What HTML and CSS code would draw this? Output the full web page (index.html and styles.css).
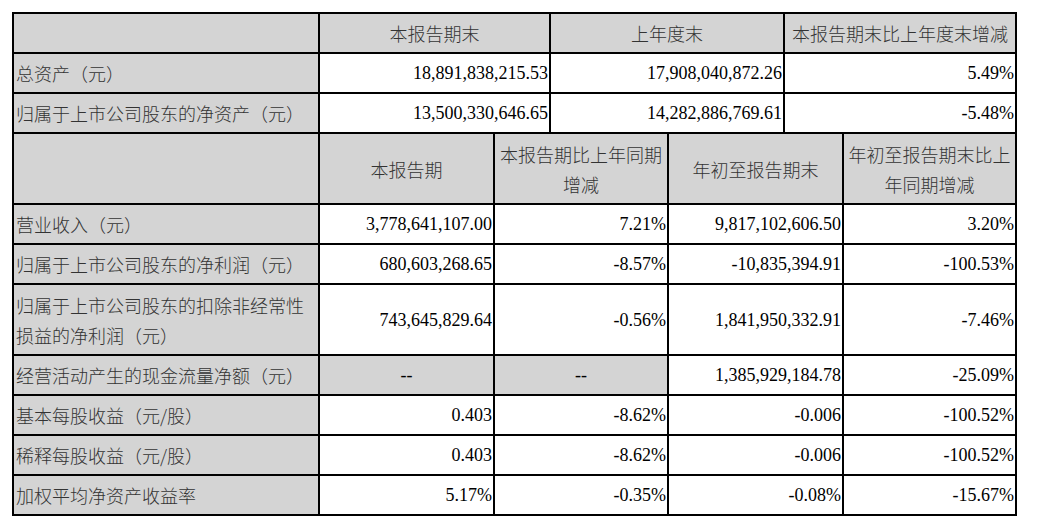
FILE: index.html
```html
<!DOCTYPE html>
<html lang="zh-CN">
<head>
<meta charset="utf-8">
<title>主要会计数据和财务指标</title>
<link rel="stylesheet" href="styles.css">
</head>
<body>
<div class="page">
<table class="fin">
  <colgroup>
    <col class="c-label">
    <col class="c-a">
    <col class="c-b">
    <col class="c-c">
    <col class="c-d">
    <col class="c-e">
    <col class="c-f">
  </colgroup>
  <tbody>
    <tr>
      <td class="lbl"></td>
      <td class="hd" colspan="2">本报告期末</td>
      <td class="hd" colspan="2">上年度末</td>
      <td class="hd" colspan="2">本报告期末比上年度末增减</td>
    </tr>
    <tr>
      <td class="lbl">总资产（元）</td>
      <td class="num" colspan="2">18,891,838,215.53</td>
      <td class="num" colspan="2">17,908,040,872.26</td>
      <td class="num" colspan="2">5.49%</td>
    </tr>
    <tr>
      <td class="lbl">归属于上市公司股东的净资产（元）</td>
      <td class="num" colspan="2">13,500,330,646.65</td>
      <td class="num" colspan="2">14,282,886,769.61</td>
      <td class="num" colspan="2">-5.48%</td>
    </tr>
    <tr class="tall">
      <td class="lbl"></td>
      <td class="hd">本报告期</td>
      <td class="hd" colspan="2">本报告期比上年同期增减</td>
      <td class="hd" colspan="2">年初至报告期末</td>
      <td class="hd">年初至报告期末比上年同期增减</td>
    </tr>
    <tr>
      <td class="lbl">营业收入（元）</td>
      <td class="num">3,778,641,107.00</td>
      <td class="num" colspan="2">7.21%</td>
      <td class="num" colspan="2">9,817,102,606.50</td>
      <td class="num">3.20%</td>
    </tr>
    <tr>
      <td class="lbl">归属于上市公司股东的净利润（元）</td>
      <td class="num">680,603,268.65</td>
      <td class="num" colspan="2">-8.57%</td>
      <td class="num" colspan="2">-10,835,394.91</td>
      <td class="num">-100.53%</td>
    </tr>
    <tr class="tall">
      <td class="lbl">归属于上市公司股东的扣除非经常性损益的净利润（元）</td>
      <td class="num">743,645,829.64</td>
      <td class="num" colspan="2">-0.56%</td>
      <td class="num" colspan="2">1,841,950,332.91</td>
      <td class="num">-7.46%</td>
    </tr>
    <tr>
      <td class="lbl">经营活动产生的现金流量净额（元）</td>
      <td class="na">--</td>
      <td class="na" colspan="2">--</td>
      <td class="num" colspan="2">1,385,929,184.78</td>
      <td class="num">-25.09%</td>
    </tr>
    <tr>
      <td class="lbl">基本每股收益（元/股）</td>
      <td class="num">0.403</td>
      <td class="num" colspan="2">-8.62%</td>
      <td class="num" colspan="2">-0.006</td>
      <td class="num">-100.52%</td>
    </tr>
    <tr>
      <td class="lbl">稀释每股收益（元/股）</td>
      <td class="num">0.403</td>
      <td class="num" colspan="2">-8.62%</td>
      <td class="num" colspan="2">-0.006</td>
      <td class="num">-100.52%</td>
    </tr>
    <tr>
      <td class="lbl">加权平均净资产收益率</td>
      <td class="num">5.17%</td>
      <td class="num" colspan="2">-0.35%</td>
      <td class="num" colspan="2">-0.08%</td>
      <td class="num">-15.67%</td>
    </tr>
  </tbody>
</table>
</div>
</body>
</html>
```

FILE: styles.css
```css
html, body {
  margin: 0;
  padding: 0;
  background: #ffffff;
}

.page {
  padding: 12px 0 0 12px;
}

.fin {
  border-collapse: collapse;
  table-layout: fixed;
  width: 1003px;
  border: 2px solid #000;
}

.c-label { width: 306px; }
.c-a { width: 175px; }
.c-b { width: 56px; }
.c-c { width: 118px; }
.c-d { width: 116px; }
.c-e { width: 59px; }
.c-f { width: 173px; }

.fin td {
  border: 2px solid #000;
  padding: 4px 2px;
  height: 30px;
  line-height: 30px;
  font-size: 18px;
  vertical-align: middle;
}

.fin tr.tall td {
  height: 61px;
}

.lbl {
  background: #d4d4d4;
  color: #333333;
  font-family: "Noto Sans CJK SC", sans-serif;
  font-weight: 300;
  text-align: left;
  padding-left: 3px;
}

.hd {
  background: #d4d4d4;
  color: #333333;
  font-family: "Noto Sans CJK SC", sans-serif;
  font-weight: 300;
  text-align: center;
}

.num {
  background: #ffffff;
  color: #000;
  font-family: "Liberation Serif", "Noto Sans CJK SC", serif;
  text-align: right;
}

.fin td.num {
  padding-right: 1px;
}

.na {
  background: #d4d4d4;
  color: #000;
  font-family: "Liberation Serif", serif;
  text-align: center;
}
```
